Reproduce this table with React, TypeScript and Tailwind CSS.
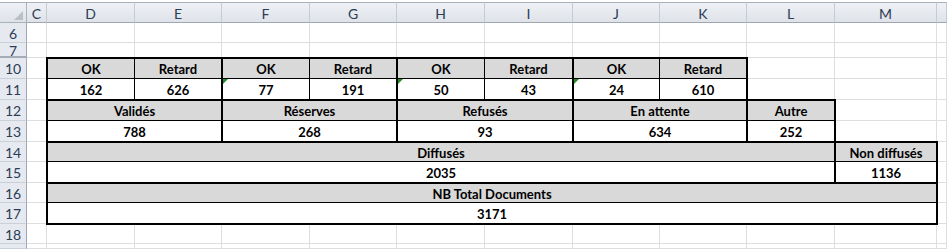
import React from 'react';

// grid placement helpers, one literal class per track
const CS = ['', 'col-start-1', 'col-start-2', 'col-start-3', 'col-start-4', 'col-start-5', 'col-start-6', 'col-start-7', 'col-start-8', 'col-start-9', 'col-start-10', 'col-start-11', 'col-start-12', 'col-start-13'];
const RS = ['', 'row-start-1', 'row-start-2', 'row-start-3', 'row-start-4', 'row-start-5', 'row-start-6', 'row-start-7', 'row-start-8', 'row-start-9', 'row-start-10', 'row-start-11', 'row-start-12', 'row-start-13'];
const SPAN: Record<number, string> = { 1: 'col-span-1', 2: 'col-span-2', 9: 'col-span-9', 10: 'col-span-10' };

// borders: thin = 1px on the gridline, medium = gridline + next pixel
const BL: Record<number, string> = { 1: '-ml-px border-l', 2: '-ml-px border-l-2' };
const BT: Record<number, string> = { 1: '-mt-px border-t', 2: '-mt-px border-t-2' };
const BR: Record<number, string> = { 1: 'border-r', 2: '-mr-px border-r-2' };
const BB: Record<number, string> = { 1: 'border-b', 2: '-mb-px border-b-2' };

const columns = ['', 'C', 'D', 'E', 'F', 'G', 'H', 'I', 'J', 'K', 'L', 'M', ''];
// last row is only a sliver, its number is out of view
const rows = ['6', '7', '10', '11', '12', '13', '14', '15', '16', '17', '18', ''];

type Cell = {
  text: string;
  col: number;
  span: number;
  row: number;
  head?: boolean;
  l: number;
  t: number;
  r: number;
  b: number;
  flag?: boolean;
};

const cells: Cell[] = [];

// rows 10/11 : OK / Retard pairs
[162, 626, 77, 191, 50, 43, 24, 610].forEach((n, i) => {
  const ok = i % 2 === 0;
  const side = { l: ok ? 2 : 1, r: ok ? 1 : 2 };
  cells.push({ text: ok ? 'OK' : 'Retard', col: 3 + i, span: 1, row: 4, head: true, t: 2, b: 1, ...side });
  cells.push({ text: String(n), col: 3 + i, span: 1, row: 5, t: 1, b: 2, flag: ok && i > 0, ...side });
});

// rows 12/13 : statuses
[
  ['Validés', '788', 3, 2],
  ['Réserves', '268', 5, 2],
  ['Refusés', '93', 7, 2],
  ['En attente', '634', 9, 2],
  ['Autre', '252', 11, 1],
].forEach(([label, value, col, span]) => {
  cells.push({ text: label as string, col: col as number, span: span as number, row: 6, head: true, l: 2, t: 2, r: 2, b: 1 });
  cells.push({ text: value as string, col: col as number, span: span as number, row: 7, l: 2, t: 1, r: 2, b: 2 });
});

// rows 14/15 : diffusion
cells.push({ text: 'Diffusés', col: 3, span: 9, row: 8, head: true, l: 2, t: 2, r: 2, b: 1 });
cells.push({ text: 'Non diffusés', col: 12, span: 1, row: 8, head: true, l: 2, t: 2, r: 2, b: 1 });
cells.push({ text: '2035', col: 3, span: 9, row: 9, l: 2, t: 1, r: 2, b: 2 });
cells.push({ text: '1136', col: 12, span: 1, row: 9, l: 2, t: 1, r: 2, b: 2 });

// rows 16/17 : total
cells.push({ text: 'NB Total Documents', col: 3, span: 10, row: 10, head: true, l: 2, t: 2, r: 2, b: 1 });
cells.push({ text: '3171', col: 3, span: 10, row: 11, l: 2, t: 1, r: 2, b: 2 });

const App: React.FC = () => {
  return (
    <div className="w-[947px] h-[249px] overflow-hidden bg-white font-['Lato','Liberation_Sans',sans-serif]">
      <div className="grid h-full grid-cols-[27px_20px_88px_87px_88px_87px_88px_88px_87px_87px_88px_102px_1fr] grid-rows-[23px_20px_15px_21px_21px_21px_21px_20px_21px_20px_21px_20px_1fr]">
        {/* corner */}
        <div className={`${CS[1]} ${RS[1]} mt-[2px] flex items-end justify-end border-t border-r border-b border-[#a9b1ba] bg-gradient-to-b from-[#eef1f5] to-[#dfe3e9] pr-[3px] pb-[2px]`}>
          <svg width="9" height="9" viewBox="0 0 9 9">
            <polygon points="9,0 9,9 0,9" fill="#b9bfc8" />
          </svg>
        </div>

        {/* column letters */}
        {columns.slice(1).map((c, i) => (
          <div
            key={'h' + i}
            className={`${CS[i + 2]} ${RS[1]} mt-[2px] flex items-center justify-center border-t border-b border-r border-t-[#a9b1ba] border-b-[#9ea7b2] border-r-[#c5cbd3] bg-gradient-to-b from-[#eef1f5] to-[#dfe3e9] pt-px text-[14px] text-[#2b3c55]`}
          >
            {c}
          </div>
        ))}

        {/* row numbers */}
        {rows.map((r, i) => (
          <div
            key={'r' + i}
            className={`${CS[1]} ${RS[i + 2]} flex items-center justify-center border-r border-r-[#9ea7b2] bg-[#e6eaf0] pt-[2px] text-[14px] leading-none text-[#2b3c55] ${
              r === '7' ? 'border-b-2 border-b-[#a3acb7]' : 'border-b border-b-[#c9d0d8]'
            }`}
          >
            {r}
          </div>
        ))}

        {/* empty sheet cells */}
        {rows.map((_, ri) =>
          columns.slice(1).map((_, ci) => (
            <div key={`g${ri}-${ci}`} className={`${CS[ci + 2]} ${RS[ri + 2]} border-r border-b border-[#dcdfe2]`} />
          ))
        )}

        {/* the summary table */}
        {cells.map((c, i) => (
          <div
            key={'c' + i}
            className={`${CS[c.col]} ${SPAN[c.span]} ${RS[c.row]} ${BL[c.l]} ${BT[c.t]} ${BR[c.r]} ${BB[c.b]} relative flex items-center justify-center border-black pt-[2px] text-[13px] font-bold leading-none text-black ${
              c.head ? 'bg-[#d9d9d9]' : 'bg-white'
            }`}
          >
            {c.flag && (
              <span className="absolute left-0 top-0 h-0 w-0 border-t-[5px] border-r-[5px] border-t-[#1f8f2a] border-r-transparent" />
            )}
            {c.text}
          </div>
        ))}
      </div>
    </div>
  );
};

export default App;
